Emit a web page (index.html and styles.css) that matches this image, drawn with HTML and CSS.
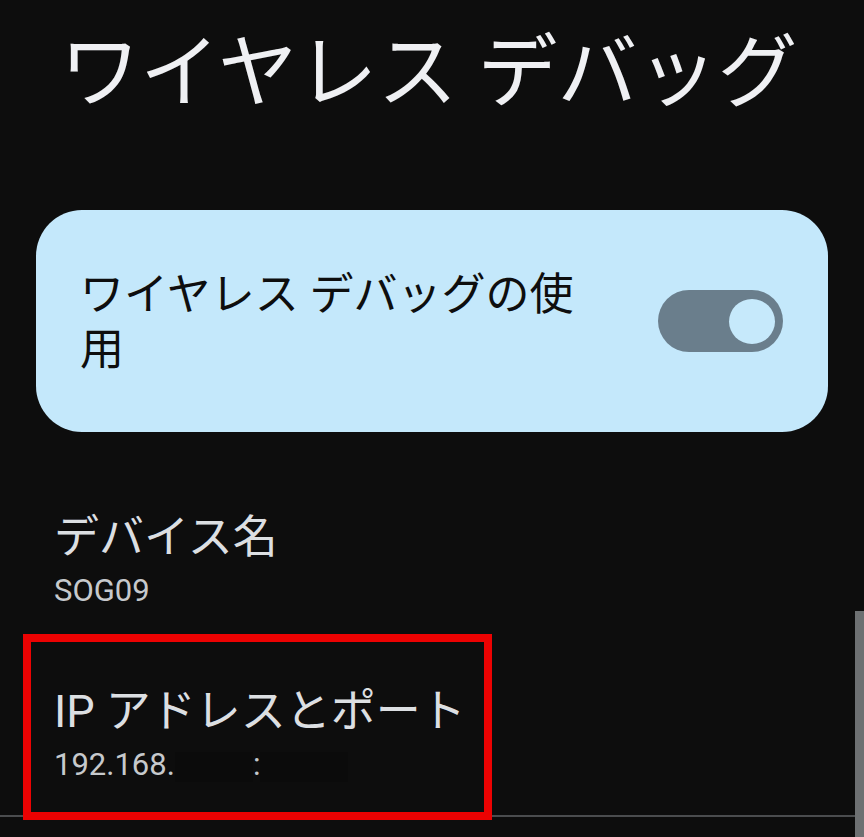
FILE: index.html
```html
<!DOCTYPE html>
<html lang="ja">
<head>
<meta charset="utf-8">
<title>ワイヤレス デバッグ</title>
<link rel="stylesheet" href="styles.css">
</head>
<body>
<main class="screen">
  <h1 class="title">ワイヤレス デバッグ</h1>

  <section class="card">
    <div class="card-text">ワイヤレス デバッグの使用</div>
    <div class="toggle" role="switch" aria-checked="true"><span class="thumb"></span></div>
  </section>

  <div class="item device">
    <div class="label">デバイス名</div>
    <div class="value">SOG09</div>
  </div>

  <div class="item ip">
    <div class="label">IP アドレスとポート</div>
    <div class="value">192.168.<span class="masked m1"></span>:<span class="masked m2"></span></div>
    <div class="highlight"></div>
  </div>

  <div class="divider"></div>
</main>
<div class="scrollbar"></div>
</body>
</html>
```

FILE: styles.css
```css
html, body {
  margin: 0;
  padding: 0;
  background: #0d0d0d;
  height: 100%;
  overflow: hidden;
}

body {
  font-family: Roboto, "Noto Sans CJK JP", "Noto Sans", sans-serif;
}

.screen {
  display: flex;
  flex-direction: column;
}

.title {
  margin: 0;
  padding: 33px 0 0 60px;
  font-size: 80px;
  line-height: 80px;
  font-weight: 400;
  color: #eff0f3;
  white-space: nowrap;
}

.card {
  margin: 97px 36px 0;
  height: 222px;
  box-sizing: border-box;
  background: #c4e8fb;
  border-radius: 46px;
  display: flex;
  align-items: center;
  padding: 0 45px 0 44px;
}

.card-text {
  width: 512px;
  font-size: 44px;
  line-height: 55px;
  color: #0e0e0e;
  padding-top: 4px;
}

.toggle {
  margin-left: auto;
  width: 125px;
  height: 62px;
  border-radius: 31px;
  background: #6a7e8c;
  display: flex;
  align-items: center;
  justify-content: flex-end;
  padding-right: 8px;
  box-sizing: border-box;
}

.thumb {
  width: 46px;
  height: 45px;
  border-radius: 50%;
  background: #c6e9fb;
}

.item {
  padding-left: 54px;
}

.device {
  margin-top: 78px;
}

.label {
  font-size: 45px;
  line-height: 55px;
  color: #dcdfe2;
  white-space: nowrap;
}

.value {
  margin-top: 8px;
  font-size: 31px;
  line-height: 36px;
  color: #c6c9cc;
  white-space: nowrap;
}

.ip {
  position: relative;
  padding-top: 75px;
  padding-bottom: 32px;
}

.masked {
  display: inline-block;
  height: 30px;
  vertical-align: middle;
  background: #0b0b0b;
}

.m1 { width: 78px; }
.m2 { width: 88px; }

.highlight {
  position: absolute;
  left: 23px;
  top: 25px;
  width: 469px;
  height: 186px;
  box-sizing: border-box;
  border: 8px solid #ec0202;
}

.divider {
  height: 2px;
  background: #4a4c4e;
}

.scrollbar {
  position: fixed;
  right: 0;
  top: 611px;
  bottom: 0;
  width: 9px;
  background: #6d7072;
}
```
